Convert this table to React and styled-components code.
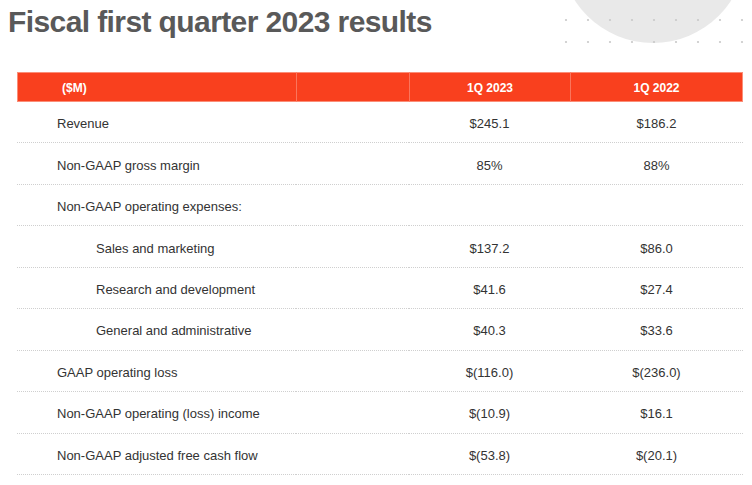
import React from "react";
import styled, { createGlobalStyle } from "styled-components";

const Global = createGlobalStyle`
  html, body { margin: 0; padding: 0; background: #ffffff; }
  body { font-family: "Liberation Sans", Arial, sans-serif; }
  * { box-sizing: border-box; }
`;

const Page = styled.div`
  position: relative;
  width: 752px;
  height: 485px;
  overflow: hidden;
  background: #ffffff;
  padding: 4px 9px 0 17px;
`;

const Decor = styled.svg`
  position: absolute;
  top: 0;
  left: 0;
  width: 752px;
  height: 60px;
  pointer-events: none;
`;

const Title = styled.h1`
  position: relative;
  margin: 0 0 32px -9px;
  font-family: "Liberation Sans", Arial, sans-serif;
  font-size: 30px;
  line-height: 36px;
  font-weight: 700;
  letter-spacing: -0.6px;
  color: #595959;
`;

const Table = styled.div`
  position: relative;
  display: grid;
  grid-template-columns: 279px 113px 161px 173px;
  width: 726px;
`;

const HeadCell = styled.div`
  height: 30px;
  background: #f9401e;
  color: #ffffff;
  font-size: 12px;
  font-weight: 700;
  display: flex;
  align-items: center;
  justify-content: ${(p) => (p.$left ? "flex-start" : "center")};
  padding-left: ${(p) => (p.$left ? "44px" : "0")};
  padding-top: 1px;
  border-top: 1px solid #fb8e78;
  border-bottom: 1px solid #fb8e78;
  border-left: ${(p) => (p.$first ? "1px solid #fb8e78" : "1px solid rgba(255,255,255,0.28)")};
  border-right: ${(p) => (p.$last ? "1px solid #fb8e78" : "none")};
`;

const Row = styled.div`
  display: contents;
`;

const Cell = styled.div`
  height: 41.44px;
  display: flex;
  align-items: center;
  justify-content: ${(p) => (p.$label ? "flex-start" : "center")};
  padding-left: ${(p) => (p.$label ? (p.$indent ? "79px" : "40px") : "0")};
  padding-top: 3px;
  font-size: 13px;
  color: #333333;
  border-bottom: 1px dotted #cfcfcf;
  white-space: nowrap;
`;

const rows = [
  ["Revenue", "$245.1", "$186.2"],
  ["Non-GAAP gross margin", "85%", "88%"],
  ["Non-GAAP operating expenses:", "", ""],
  ["Sales and marketing", "$137.2", "$86.0", true],
  ["Research and development", "$41.6", "$27.4", true],
  ["General and administrative", "$40.3", "$33.6", true],
  ["GAAP operating loss", "$(116.0)", "$(236.0)"],
  ["Non-GAAP operating (loss) income", "$(10.9)", "$16.1"],
  ["Non-GAAP adjusted free cash flow", "$(53.8)", "$(20.1)"],
];

function Decoration() {
  const xs = [];
  for (let x = 566; x <= 752; x += 22) xs.push(x);
  const ys = [20, 42];
  return (
    <Decor viewBox="0 0 752 60">
      <circle cx="653" cy="-50" r="93" fill="#e9e9e9" />
      {ys.map((y) =>
        xs.map((x) => (
          <circle key={`${x}-${y}`} cx={x} cy={y} r="1.1" fill="#c9c9c9" />
        ))
      )}
    </Decor>
  );
}

export default function App() {
  return (
    <Page>
      <Global />
      <Decoration />
      <Title>Fiscal first quarter 2023 results</Title>
      <Table>
        <HeadCell $left $first>($M)</HeadCell>
        <HeadCell />
        <HeadCell>1Q 2023</HeadCell>
        <HeadCell $last>1Q 2022</HeadCell>
        {rows.map(([label, a, b, indent]) => (
          <Row key={label}>
            <Cell $label $indent={indent}>{label}</Cell>
            <Cell />
            <Cell>{a}</Cell>
            <Cell>{b}</Cell>
          </Row>
        ))}
      </Table>
    </Page>
  );
}
